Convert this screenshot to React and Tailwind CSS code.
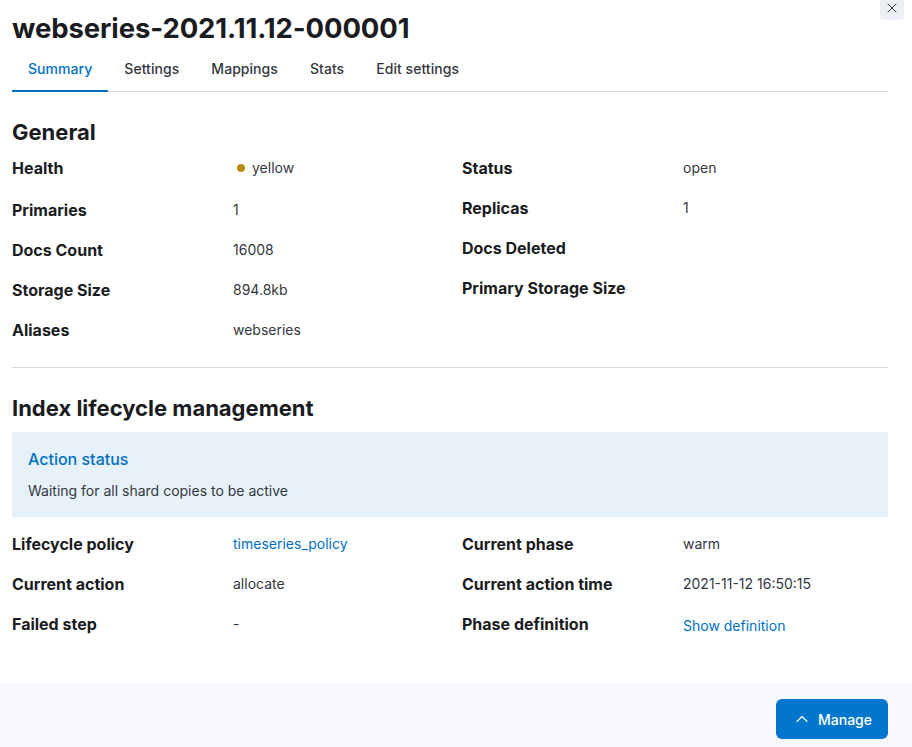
import React from 'react';
import { X, ChevronUp } from 'lucide-react';

const tabs = ['Summary', 'Settings', 'Mappings', 'Stats', 'Edit settings'];

const Row = ({ label, children, className = 'mb-4' }) => (
  <div className={`grid grid-cols-[221px_1fr] items-center h-6 ${className}`}>
    <div className="text-[16px] font-bold text-[#1a1c21] leading-6">{label}</div>
    <div className="text-[14px] text-[#343741] leading-5">{children}</div>
  </div>
);

const Link = ({ children, className = '' }) => (
  <span className={`text-[#0071c2] ${className}`}>{children}</span>
);

export default function App() {
  return (
    <div className="relative bg-white min-h-screen" style={{ fontFamily: 'Inter, "Noto Sans", sans-serif' }}>
      <button className="absolute top-[-4px] right-[8px] w-6 h-6 rounded bg-[#eceff4] flex items-center justify-center text-[#343741]">
        <X size={16} strokeWidth={1.5} />
      </button>

      <div className="pl-3 pr-6">
        <h1 className="pt-3 text-[27.5px] leading-8 font-bold text-[#1a1c21] tracking-[-0.1px]">
          webseries-2021.11.12-000001
        </h1>

        <div className="flex border-b border-[#d3dae6] h-12">
          {tabs.map((t, i) => (
            <div
              key={t}
              className={`px-4 pt-[2px] flex items-center text-[14px] font-medium tracking-[0.05px] relative ${
                i === 0 ? 'text-[#0071c2]' : 'text-[#343741]'
              }`}
            >
              {t}
              {i === 0 && <span className="absolute left-0 right-0 bottom-[-1px] h-[2px] bg-[#0071c2]" />}
            </div>
          ))}
        </div>

        <h2 className="mt-[26px] text-[22px] leading-7 font-bold text-[#1a1c21]">General</h2>

        <div className="grid grid-cols-[450px_1fr] mt-[10px]">
          <div>
            <Row label="Health" className="mb-[18px]">
              <span className="flex items-center gap-[7px] pl-[4px]">
                <span className="w-2 h-2 rounded-full bg-[#b88c12]" />
                yellow
              </span>
            </Row>
            <Row label="Primaries">1</Row>
            <Row label="Docs Count">16008</Row>
            <Row label="Storage Size">894.8kb</Row>
            <Row label="Aliases" className="mb-0">webseries</Row>
          </div>
          <div>
            <Row label="Status">open</Row>
            <Row label="Replicas">1</Row>
            <Row label="Docs Deleted"></Row>
            <Row label="Primary Storage Size" className="mb-0"></Row>
          </div>
        </div>

        <div className="mt-[25px] border-t border-[#d3dae6]" />

        <h2 className="mt-[26px] text-[22px] leading-7 font-bold text-[#1a1c21]">Index lifecycle management</h2>

        <div className="mt-[10px] bg-[#e6f1fa] px-4 pt-4 pb-4">
          <div className="text-[16px] leading-[22px] font-medium text-[#0071c2]">Action status</div>
          <div className="mt-[11px] text-[14px] leading-5 text-[#343741]">Waiting for all shard copies to be active</div>
        </div>

        <div className="grid grid-cols-[450px_1fr] mt-[15px] pb-[47px]">
          <div>
            <Row label="Lifecycle policy"><Link>timeseries_policy</Link></Row>
            <Row label="Current action">allocate</Row>
            <Row label="Failed step" className="mb-0">-</Row>
          </div>
          <div>
            <Row label="Current phase">warm</Row>
            <Row label="Current action time">2021-11-12 16:50:15</Row>
            <Row label="Phase definition" className="mb-0">
              <Link className="relative top-[2px]">Show definition</Link>
            </Row>
          </div>
        </div>
      </div>

      <div className="bg-[#f7f8fc] flex justify-end pr-6 pt-4 pb-4">
        <button className="w-[112px] h-10 rounded-md bg-[#0077cc] text-white text-[14px] font-medium flex items-center justify-center gap-[6px]">
          <ChevronUp size={20} strokeWidth={1.3} />
          Manage
        </button>
      </div>
    </div>
  );
}
